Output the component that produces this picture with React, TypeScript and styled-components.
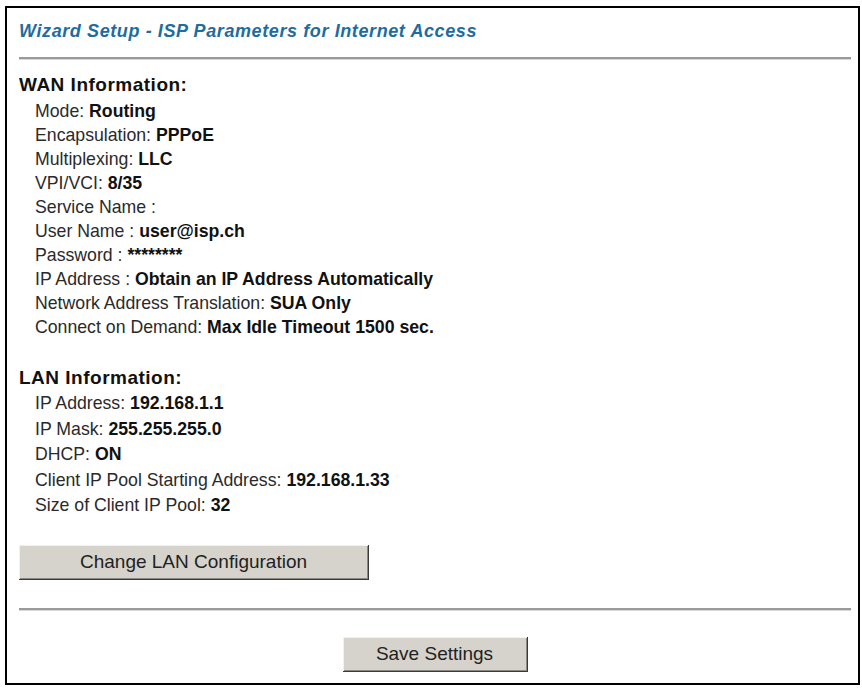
import React from "react";
import styled, { createGlobalStyle } from "styled-components";

const GlobalStyle = createGlobalStyle`
  html, body {
    margin: 0;
    padding: 0;
    background: #ffffff;
  }
  body {
    font-family: "Liberation Sans", Arial, sans-serif;
    color: #1a1a1a;
  }
`;

const Frame = styled.div`
  box-sizing: border-box;
  width: 855px;
  height: 679px;
  margin: 6px 0 0 5px;
  border: 2px solid #000;
  padding: 12px 7px 0 12px;
  display: flex;
  flex-direction: column;
`;

const Title = styled.div`
  font-size: 18px;
  font-weight: bold;
  font-style: italic;
  color: #1f6c9f;
  letter-spacing: 0.6px;
  line-height: 22px;
`;

const Rule = styled.div<{ $top: number }>`
  height: 2px;
  background: #9a9a9a;
  border-bottom: 1px solid #d8d8d8;
  margin-top: ${(p) => p.$top}px;
`;

const Section = styled.div<{ $top: number }>`
  margin-top: ${(p) => p.$top}px;
  display: flex;
  flex-direction: column;
`;

const Heading = styled.div`
  font-size: 19px;
  font-weight: bold;
  color: #111;
  letter-spacing: 0.5px;
  line-height: 22px;
`;

const List = styled.div<{ $pitch: number; $top: number }>`
  display: flex;
  flex-direction: column;
  margin-top: ${(p) => p.$top}px;
  padding-left: 16px;
  font-size: 17.7px;
  line-height: ${(p) => p.$pitch}px;
  color: #2a2a2a;
`;

const Value = styled.b`
  color: #111;
`;

const Button = styled.button<{ $width: number }>`
  box-sizing: border-box;
  width: ${(p) => p.$width}px;
  height: 35px;
  background: #d6d3cc;
  border: none;
  border-right: 1px solid #3a3a3a;
  border-bottom: 1px solid #3a3a3a;
  box-shadow: inset 1px 1px 0 #f2f1ee, inset -1px -1px 0 #8a8882;
  font-family: "Liberation Sans", Arial, sans-serif;
  font-size: 19px;
  color: #222;
  padding: 0;
`;

const ButtonRow = styled.div<{ $top: number; $center?: boolean }>`
  display: flex;
  justify-content: ${(p) => (p.$center ? "center" : "flex-start")};
  margin-top: ${(p) => p.$top}px;
`;

type Row = [string, string];

const wan: Row[] = [
  ["Mode: ", "Routing"],
  ["Encapsulation: ", "PPPoE"],
  ["Multiplexing: ", "LLC"],
  ["VPI/VCI: ", "8/35"],
  ["Service Name : ", ""],
  ["User Name : ", "user@isp.ch"],
  ["Password : ", "********"],
  ["IP Address : ", "Obtain an IP Address Automatically"],
  ["Network Address Translation: ", "SUA Only"],
  ["Connect on Demand: ", "Max Idle Timeout 1500 sec."],
];

const lan: Row[] = [
  ["IP Address: ", "192.168.1.1"],
  ["IP Mask: ", "255.255.255.0"],
  ["DHCP: ", "ON"],
  ["Client IP Pool Starting Address: ", "192.168.1.33"],
  ["Size of Client IP Pool: ", "32"],
];

function Rows({ rows, pitch }: { rows: Row[]; pitch: number }) {
  return (
    <List $pitch={pitch} $top={2.5}>
      {rows.map(([label, value]) => (
        <div key={label}>
          {label}
          {value && <Value>{value}</Value>}
        </div>
      ))}
    </List>
  );
}

export default function App() {
  return (
    <>
      <GlobalStyle />
      <Frame>
        <Title>Wizard Setup - ISP Parameters for Internet Access</Title>
        <Rule $top={15} />
        <Section $top={14}>
          <Heading>WAN Information:</Heading>
          <Rows rows={wan} pitch={24} />
        </Section>
        <Section $top={28}>
          <Heading>LAN Information:</Heading>
          <Rows rows={lan} pitch={25.5} />
        </Section>
        <ButtonRow $top={26}>
          <Button $width={350}>Change LAN Configuration</Button>
        </ButtonRow>
        <Rule $top={28} />
        <ButtonRow $top={26} $center>
          <Button $width={185}>Save Settings</Button>
        </ButtonRow>
      </Frame>
    </>
  );
}
